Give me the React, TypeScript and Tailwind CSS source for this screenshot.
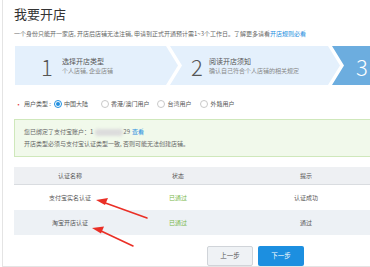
import React from "react";

const font = { fontFamily: '"Noto Sans CJK SC", "Noto Sans", sans-serif' };

function Radio({ checked, label, className = "" }: { checked?: boolean; label: string; className?: string }) {
  return (
    <div className={`flex items-center ${className}`}>
      <span
        className={`flex h-[8px] w-[8px] items-center justify-center rounded-full border ${
          checked ? "border-[#1e8ee0]" : "border-[#c9c9c9]"
        } bg-white`}
      >
        {checked && <span className="h-[4px] w-[4px] rounded-full bg-[#1e8ee0]" />}
      </span>
      <span className="ml-[2px] text-[6px] leading-[8px] text-[#555]">{label}</span>
    </div>
  );
}

export default function App() {
  return (
    <div className="relative h-[267px] w-[370px] overflow-hidden bg-white" style={font}>
      <div className="pl-[2px]">
        <div className="h-[267px] w-[400px] border-b border-l border-[#e4e4e4] pl-[11px] pt-[7px]">
          <div className="text-[13px] leading-[14px] text-[#333]">我要开店</div>
          <div className="mt-[9px] whitespace-nowrap text-[6px] leading-[8px] text-[#666]">
            一个身份只能开一家店, 开店后店铺无法注销, 申请到正式开通预计需1~3个工作日。了解更多请看
            <span className="text-[#1e8ee0]">开店规则必看</span>
          </div>

          {/* steps */}
          <div className="mt-[8px] flex h-[39px] pl-[1px]">
            <div className="flex w-[163px] shrink-0 items-center bg-[#e4f0fc] pl-[26px] [clip-path:polygon(0_0,calc(100%-12px)_0,100%_50%,calc(100%-12px)_100%,0_100%)]">
              <span className="w-[16px] text-[22px] font-light leading-[24px] text-[#555]">1</span>
              <div className="ml-[5px]">
                <div className="text-[7px] leading-[9px] text-[#555]">选择开店类型</div>
                <div className="mt-[1px] text-[6px] leading-[8px] text-[#888]">个人店铺, 企业店铺</div>
              </div>
            </div>
            <div className="ml-[-8px] flex w-[170px] shrink-0 items-center bg-[#e4f0fc] pl-[21px] [clip-path:polygon(0_0,calc(100%-12px)_0,100%_50%,calc(100%-12px)_100%,0_100%,12px_50%)]">
              <span className="w-[14px] text-[22px] font-light leading-[24px] text-[#555]">2</span>
              <div className="ml-[4px]">
                <div className="text-[7px] leading-[9px] text-[#555]">阅读开店须知</div>
                <div className="mt-[1px] text-[6px] leading-[8px] text-[#888]">确认自己符合个人店铺的相关规定</div>
              </div>
            </div>
            <div className="ml-[-8px] flex w-[80px] shrink-0 items-center bg-[#6caddf] pl-[24px] [clip-path:polygon(0_0,100%_0,100%_100%,0_100%,12px_50%)]">
              <span className="text-[22px] font-light leading-[24px] text-white">3</span>
            </div>
          </div>

          {/* radio row */}
          <div className="mt-[14px] flex h-[10px] items-center pl-[1px]">
            <span className="text-[7px] leading-[8px] text-[#e4393c]">•</span>
            <span className="ml-[2px] text-[6px] leading-[8px] text-[#555]">用户类型 :</span>
            <Radio checked label="中国大陆" className="ml-[3px]" />
            <Radio label="香港/澳门用户" className="ml-[13px]" />
            <Radio label="台湾用户" className="ml-[8px]" />
            <Radio label="外籍用户" className="ml-[9px]" />
          </div>

          {/* alert */}
          <div className="mt-[10px] w-[380px] border border-[#cfe8bb] bg-[#f1f9eb] pb-[8px] pl-[9px] pt-[8px] text-[6px] leading-[8px] text-[#666]">
            <div className="flex items-center">
              <span>您已绑定了支付宝账户：1</span>
              <span className="ml-[2px] h-[7px] w-[28px] rounded-[3px] bg-[#dcdcdc] blur-[1.5px]" />
              <span>29</span>
              <span className="ml-[2px] text-[#1e8ee0]">查看</span>
            </div>
            <div className="mt-[4px]">开店类型必须与支付宝认证类型一致, 否则可能无法创建店铺。</div>
          </div>

          {/* table */}
          <div className="mt-[10px] w-[380px] text-[6px] leading-[8px] text-[#555]">
            <div className="flex h-[18px] items-center border-b border-[#d9dce0] bg-[#eef0f3]">
              <div className="w-[112px] text-center">认证名称</div>
              <div className="w-[104px] text-center">状态</div>
              <div className="w-[152px] text-center">提示</div>
            </div>
            <div className="flex h-[25px] items-center bg-white">
              <div className="w-[112px] text-center">支付宝实名认证</div>
              <div className="w-[104px] text-center text-[#79b84a]">已通过</div>
              <div className="w-[152px] text-center">认证成功</div>
            </div>
            <div className="flex h-[25px] items-center bg-[#edf1f5]">
              <div className="w-[112px] text-center">淘宝开店认证</div>
              <div className="w-[104px] text-center text-[#79b84a]">已通过</div>
              <div className="w-[152px] text-center">通过</div>
            </div>
          </div>

          {/* buttons */}
          <div className="mt-[11px] flex gap-[5px] pl-[193px]">
            <div className="flex h-[20px] w-[46px] items-center justify-center rounded-[2px] border border-[#d0d4d9] bg-[#eff2f5] text-[6.5px] text-[#555]">
              上一步
            </div>
            <div className="flex h-[20px] w-[46px] items-center justify-center rounded-[2px] bg-[#1c8fe0] text-[6.5px] text-white">
              下一步
            </div>
          </div>
        </div>
      </div>

      {/* red annotation arrows */}
      <svg className="pointer-events-none absolute left-0 top-0" width="370" height="267" viewBox="0 0 370 267">
        <g fill="#ea2f26" stroke="#ea2f26" strokeLinecap="round">
          <line x1="147" y1="218" x2="104" y2="202.5" strokeWidth="1.6" />
          <polygon points="96,200 108,198 105,205" stroke="none" />
          <line x1="133" y1="246" x2="100" y2="230.5" strokeWidth="1.6" />
          <polygon points="92,228 104,226.5 101,233.5" stroke="none" />
        </g>
      </svg>
    </div>
  );
}
